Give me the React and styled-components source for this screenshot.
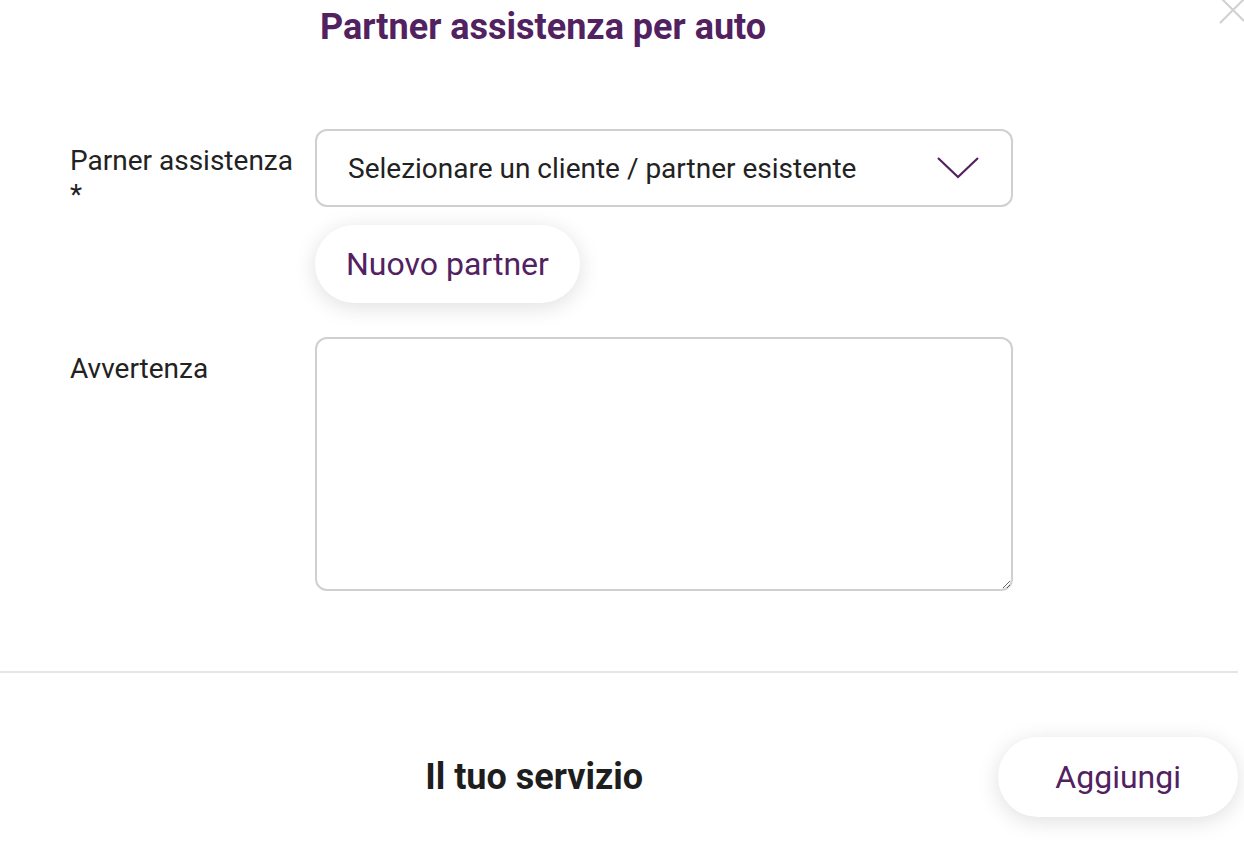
import React from "react";
import styled, { createGlobalStyle } from "styled-components";

const GlobalStyle = createGlobalStyle`
  body {
    margin: 0;
    background: #fff;
    font-family: Roboto, "Liberation Sans", sans-serif;
    color: #222;
  }
`;

const PURPLE = "#52215f";

function Chevron() {
  return (
    <svg width="42" height="24" viewBox="0 0 42 24" fill="none">
      <path d="M1 2 L21 21 L41 2" stroke={PURPLE} strokeWidth="2.2" />
    </svg>
  );
}

function CloseIcon() {
  return (
    <svg width="30" height="26" viewBox="0 0 30 26" fill="none">
      <path d="M6 23 L30 -1 M8 -1 L30 21" stroke="#d0d0d0" strokeWidth="2" />
    </svg>
  );
}

function App() {
  return (
    <Page>
      <GlobalStyle />
      <CloseButton aria-label="chiudi">
        <CloseIcon />
      </CloseButton>

      <Title>Partner assistenza per auto</Title>

      <Form>
        <Row>
          <Label>
            Parner assistenza
            <br />*
          </Label>
          <Field>
            <Select>
              <span>Selezionare un cliente / partner esistente</span>
              <Chevron />
            </Select>
            <PillButton>Nuovo partner</PillButton>
          </Field>
        </Row>

        <Row>
          <Label>Avvertenza</Label>
          <Field>
            <TextArea />
          </Field>
        </Row>
      </Form>

      <Divider />

      <Footer>
        <SectionTitle>Il tuo servizio</SectionTitle>
        <PillButton wide>Aggiungi</PillButton>
      </Footer>
    </Page>
  );
}

const Page = styled.div`
  position: relative;
  width: 1244px;
  height: 842px;
  overflow: hidden;
  padding-right: 6px;
  box-sizing: border-box;
`;

const CloseButton = styled.button`
  position: absolute;
  top: 0;
  right: 0;
  border: none;
  background: transparent;
  padding: 0;
  line-height: 0;
`;

const Title = styled.h1`
  margin: 0;
  padding: 7px 0 0 320px;
  font-size: 36px;
  line-height: 40px;
  font-weight: 700;
  color: ${PURPLE};
`;

const Form = styled.div`
  display: flex;
  flex-direction: column;
  gap: 34px;
  padding: 82px 0 0 70px;
`;

const Row = styled.div`
  display: grid;
  grid-template-columns: 245px 698px;
`;

const Label = styled.div`
  font-size: 28px;
  line-height: 34px;
  padding-top: 15px;
`;

const Field = styled.div`
  display: flex;
  flex-direction: column;
  align-items: flex-start;
  gap: 18px;
`;

const Select = styled.div`
  box-sizing: border-box;
  width: 100%;
  height: 78px;
  border: 2px solid #d0d0d0;
  border-radius: 12px;
  display: flex;
  align-items: center;
  justify-content: space-between;
  padding: 0 32px 0 31px;
  font-size: 28px;
  color: #222;
`;

const PillButton = styled.button`
  height: ${(p) => (p.wide ? "80px" : "78px")};
  padding: 0 ${(p) => (p.wide ? "57px" : "31px")};
  border: none;
  border-radius: 40px;
  background: #fff;
  box-shadow: 0 4px 22px rgba(0, 0, 0, 0.13);
  font-family: Roboto, "Liberation Sans", sans-serif;
  font-size: 32px;
  color: ${PURPLE};
  cursor: pointer;
`;

const TextArea = styled.textarea`
  box-sizing: border-box;
  width: 100%;
  height: 254px;
  border: 2px solid #d0d0d0;
  border-radius: 12px;
  font-family: Roboto, "Liberation Sans", sans-serif;
  font-size: 28px;
  outline: none;
`;

const Divider = styled.hr`
  margin: 80px 0 0 0;
  border: none;
  border-top: 2px solid #e6e6e6;
`;

const Footer = styled.div`
  display: flex;
  align-items: center;
  padding: 64px 0 0 70px;
`;

const SectionTitle = styled.h2`
  flex: 1;
  margin: 0;
  text-align: center;
  font-size: 36px;
  font-weight: 700;
  color: #1e1e1e;
`;

export default App;
